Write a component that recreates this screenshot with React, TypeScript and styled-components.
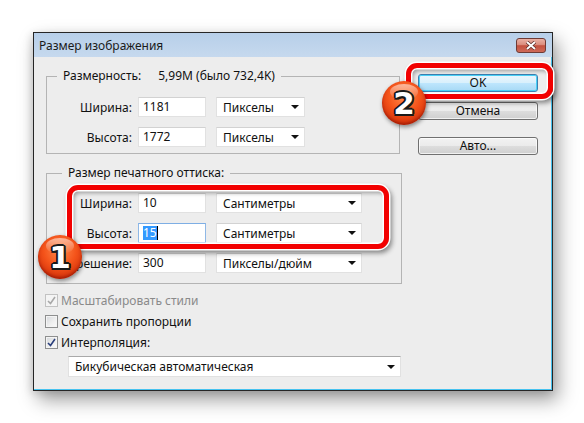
import styled, { createGlobalStyle } from "styled-components";

const GlobalStyle = createGlobalStyle`
  html, body {
    margin: 0;
    padding: 0;
    background: #ffffff;
  }
  body {
    font-family: "Noto Sans", "DejaVu Sans", sans-serif;
    font-size: 12px;
    color: #111;
  }
  * {
    box-sizing: border-box;
  }
`;

const Page = styled.div`
  width: 584px;
  height: 423px;
  padding: 32px 0 0 33px;
  overflow: hidden;
`;

const Window = styled.div`
  position: relative;
  width: 520px;
  height: 359px;
  border: 1px solid #262626;
  background: #ededed;
  box-shadow: inset -1px -1px 0 #46c2ef, 5px 9px 18px rgba(0, 0, 0, 0.38),
    -2px 2px 8px rgba(0, 0, 0, 0.12);
  display: flex;
  flex-direction: column;
`;

const TitleBar = styled.div`
  height: 24px;
  flex: none;
  display: flex;
  align-items: center;
  justify-content: space-between;
  padding: 0 6px 0 5px;
  background: linear-gradient(#b7cfe9, #c6d9ee);
  color: #1b1b1b;
`;

const CloseButton = styled.div`
  width: 30px;
  height: 15px;
  border: 1px solid #6e3b35;
  border-radius: 3px;
  background: linear-gradient(#eab0a3 0%, #dc8f80 42%, #c4513f 52%, #cf6a58 100%);
  display: flex;
  align-items: center;
  justify-content: center;
  margin-top: 1px;
`;

const Body = styled.div`
  flex: 1;
  display: flex;
  padding: 0 0 0 12px;
`;

const LeftColumn = styled.div`
  width: 356px;
  display: flex;
  flex-direction: column;
`;

const RightColumn = styled.div`
  display: flex;
  flex-direction: column;
  padding: 17px 0 0 16px;
`;

const Group = styled.fieldset<{ $width: number; $padTop: number; $padBottom: number }>`
  width: ${(p) => p.$width}px;
  margin: 12px 0 0 0;
  padding: ${(p) => p.$padTop}px 0 ${(p) => p.$padBottom}px 0;
  border: 1px solid #b4b4b4;
  display: flex;
  flex-direction: column;
  gap: 10px;
  min-width: 0;
`;

const Legend = styled.legend<{ $offset: number }>`
  margin-left: ${(p) => p.$offset}px;
  padding: 0 6px;
  line-height: 14px;
  height: 14px;
`;

const LegendValue = styled.span`
  margin-left: 17px;
`;

const Row = styled.div`
  display: grid;
  grid-template-columns: 91px 68px auto;
  align-items: center;
  height: 20px;
`;

const Label = styled.span`
  text-align: right;
  margin-right: 6px;
`;

const Input = styled.div<{ $focused?: boolean }>`
  height: 20px;
  background: #fff;
  border: 1px solid ${(p) => (p.$focused ? "#8fb8e6" : "#e1e1e1")};
  border-top-color: ${(p) => (p.$focused ? "#7eaee4" : "#d2d2d2")};
  padding-left: 4px;
  line-height: 18px;
  display: flex;
  align-items: center;
`;

const Selection = styled.span`
  background: #3399ff;
  color: #fff;
  line-height: 14px;
`;

const Caret = styled.span`
  width: 1px;
  height: 14px;
  background: #000;
`;

const Combo = styled.div<{ $width: number; $inset?: number }>`
  width: ${(p) => p.$width}px;
  height: ${(p) => (p.$inset ? 21 : 20)}px;
  margin-left: ${(p) => p.$inset ?? 10}px;
  background: #fff;
  border: 1px solid #e1e1e1;
  border-top-color: ${(p) => (p.$inset ? "#a9a9a9" : "#d2d2d2")};
  display: flex;
  align-items: center;
  justify-content: space-between;
  padding: 0 5px 0 6px;
`;

const Arrow = styled.span`
  width: 0;
  height: 0;
  border-left: 4px solid transparent;
  border-right: 4px solid transparent;
  border-top: 4px solid #111;
`;

const Checks = styled.div`
  display: flex;
  flex-direction: column;
  margin: 6px 0 0 -1px;
`;

const CheckRow = styled.div<{ $disabled?: boolean }>`
  height: 21px;
  display: flex;
  align-items: center;
  gap: 3px;
  color: ${(p) => (p.$disabled ? "#8a8a8a" : "#111")};
`;

const CheckBox = styled.span<{ $disabled?: boolean }>`
  width: 13px;
  height: 13px;
  border: 1px solid ${(p) => (p.$disabled ? "#c2c2c2" : "#8e8f8f")};
  background: ${(p) =>
    p.$disabled
      ? "#f4f4f4"
      : "linear-gradient(135deg, #d4d7db 0%, #eeeeee 55%, #fbfbfb 100%)"};
  box-shadow: inset 0 0 0 1px #f4f4f4;
  display: flex;
  align-items: center;
  justify-content: center;
`;

const InterpCombo = styled(Combo)`
  margin-top: 3px;
  padding-left: 6px;
`;

const Button = styled.div<{ $focused?: boolean; $gap?: number }>`
  width: 120px;
  height: 18px;
  margin-top: ${(p) => p.$gap ?? 0}px;
  border: 1px solid ${(p) => (p.$focused ? "#3c7fb1" : "#707070")};
  border-radius: 3px;
  background: ${(p) =>
    p.$focused
      ? "linear-gradient(#eaf6fd 0%, #d9f0fc 50%, #bee6fd 51%, #a7d9f5 100%)"
      : "linear-gradient(#f2f2f2 0%, #ebebeb 50%, #dddddd 51%, #cfcfcf 100%)"};
  box-shadow: inset 0 0 0 1px ${(p) => (p.$focused ? "#4ad1f7" : "rgba(255,255,255,0.7)")};
  display: flex;
  align-items: center;
  justify-content: center;
  line-height: 14px;
`;

const Highlight = styled.div<{ $x: number; $y: number; $w: number; $h: number }>`
  position: absolute;
  left: ${(p) => p.$x}px;
  top: ${(p) => p.$y}px;
  width: ${(p) => p.$w}px;
  height: ${(p) => p.$h}px;
  border: 5px solid #f20000;
  border-radius: 11px;
  box-shadow: 0 0 0 1.5px #ffffff, inset 0 0 0 1.5px #ffffff,
    2px 3px 5px 1px rgba(0, 0, 0, 0.45), inset 2px 3px 4px rgba(0, 0, 0, 0.35);
  pointer-events: none;
`;

const Badge = styled.div<{ $x: number; $y: number }>`
  position: absolute;
  left: ${(p) => p.$x}px;
  top: ${(p) => p.$y}px;
  width: 44px;
  height: 44px;
  border-radius: 50%;
  background: radial-gradient(circle at 50% 35%, #ff8a4a 0%, #f4531a 45%, #d2300a 80%, #a81f05 100%);
  box-shadow: 1px 2px 4px rgba(0, 0, 0, 0.45), inset 0 -2px 3px rgba(120, 10, 0, 0.5);
  display: flex;
  align-items: center;
  justify-content: center;
  overflow: hidden;

  &::before {
    content: "";
    position: absolute;
    left: 8px;
    top: 3px;
    width: 28px;
    height: 16px;
    border-radius: 50%;
    background: linear-gradient(rgba(255, 255, 255, 0.55), rgba(255, 255, 255, 0));
  }
`;

const BadgeNumber = styled.span`
  position: relative;
  font-family: "DejaVu Sans", sans-serif;
  font-weight: 700;
  font-size: 31px;
  line-height: 1;
  color: #ffffff;
  text-shadow: -2px 0 0 #1a1a1a, 2px 0 0 #1a1a1a, 0 -2px 0 #1a1a1a, 0 2px 0 #1a1a1a,
    -1.5px -1.5px 0 #1a1a1a, 1.5px -1.5px 0 #1a1a1a, -1.5px 1.5px 0 #1a1a1a,
    1.5px 1.5px 0 #1a1a1a;
  margin-top: 1px;
`;

function Check({ color }: { color: string }) {
  return (
    <svg width="9" height="9" viewBox="0 0 9 9">
      <path d="M1 5 L3.5 7.5 L8 1" fill="none" stroke={color} strokeWidth="1.6" />
    </svg>
  );
}

type Field = { label: string; value: string; unit: string; focused?: boolean };

const pixelRows: Field[] = [
  { label: "Ширина:", value: "1181", unit: "Пикселы" },
  { label: "Высота:", value: "1772", unit: "Пикселы" },
];

const printRows: Field[] = [
  { label: "Ширина:", value: "10", unit: "Сантиметры" },
  { label: "Высота:", value: "15", unit: "Сантиметры", focused: true },
  { label: "Разрешение:", value: "300", unit: "Пикселы/дюйм" },
];

function FieldRow({ field, comboWidth }: { field: Field; comboWidth: number }) {
  return (
    <Row>
      <Label>{field.label}</Label>
      <Input $focused={field.focused}>
        {field.focused ? (
          <>
            <Selection>{field.value}</Selection>
            <Caret />
          </>
        ) : (
          field.value
        )}
      </Input>
      <Combo $width={comboWidth}>
        <span>{field.unit}</span>
        <Arrow />
      </Combo>
    </Row>
  );
}

export default function App() {
  return (
    <>
      <GlobalStyle />
      <Page>
        <Window>
          <TitleBar>
            <span>Размер изображения</span>
            <CloseButton>
              <svg width="12" height="9" viewBox="0 0 12 9">
                <path d="M2 1 L10 8 M10 1 L2 8" stroke="#5a2a25" strokeWidth="3.4" />
                <path d="M2 1 L10 8 M10 1 L2 8" stroke="#ffffff" strokeWidth="2" />
              </svg>
            </CloseButton>
          </TitleBar>
          <Body>
            <LeftColumn>
              <Group $width={354} $padTop={14} $padBottom={6}>
                <Legend $offset={10}>
                  Размерность:<LegendValue>5,99M (было 732,4K)</LegendValue>
                </Legend>
                {pixelRows.map((f) => (
                  <FieldRow key={f.label} field={f} comboWidth={89} />
                ))}
              </Group>
              <Group $width={356} $padTop={13} $padBottom={10}>
                <Legend $offset={15}>Размер печатного оттиска:</Legend>
                {printRows.map((f) => (
                  <FieldRow key={f.label} field={f} comboWidth={146} />
                ))}
              </Group>
              <Checks>
                <CheckRow $disabled>
                  <CheckBox $disabled>
                    <Check color="#a8a8a8" />
                  </CheckBox>
                  Масштабировать стили
                </CheckRow>
                <CheckRow>
                  <CheckBox />
                  Сохранить пропорции
                </CheckRow>
                <CheckRow>
                  <CheckBox>
                    <Check color="#2a3f7c" />
                  </CheckBox>
                  Интерполяция:
                </CheckRow>
              </Checks>
              <InterpCombo $width={333} $inset={22}>
                <span>Бикубическая автоматическая</span>
                <Arrow />
              </InterpCombo>
            </LeftColumn>
            <RightColumn>
              <Button $focused>OK</Button>
              <Button $gap={10}>Отмена</Button>
              <Button $gap={17}>Авто...</Button>
            </RightColumn>
          </Body>

          <Highlight $x={33} $y={152} $w={322} $h={64} />
          <Highlight $x={372} $y={30} $w={147} $h={36} />
          <Badge $x={4} $y={202}>
            <BadgeNumber>1</BadgeNumber>
          </Badge>
          <Badge $x={348} $y={48}>
            <BadgeNumber>2</BadgeNumber>
          </Badge>
        </Window>
      </Page>
    </>
  );
}
